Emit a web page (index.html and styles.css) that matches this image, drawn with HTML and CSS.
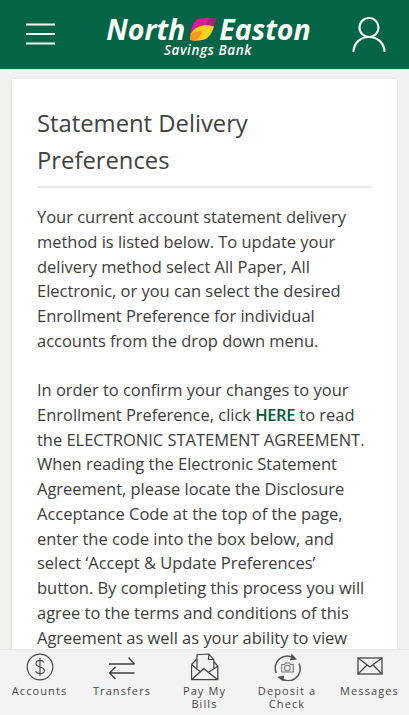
FILE: index.html
```html
<!DOCTYPE html>
<html lang="en">
<head>
<meta charset="utf-8">
<title>Statement Delivery Preferences</title>
<link rel="stylesheet" href="styles.css">
</head>
<body>
<div class="app">
  <header class="topbar">
    <svg class="menu" width="30" height="22" viewBox="0 0 30 22"><path d="M0 1.500H29M0 11H29M0 20.500H29" stroke="#f2f7f4" stroke-width="2" fill="none"/></svg>
    <div class="logo">
      <div class="logo-main"><span class="north">North</span><svg class="leaf" width="27" height="23" viewBox="0 0 28 24"><path d="M8 1 C12 0 22 0 27 0 C26 8 22 18 16 22 C12 24 4 24 0 23 C0 14 2 5 8 1Z" fill="#e2189a"/><path d="M20 0H27C27 3 26 6 25 9L17 7Z" fill="#a8246e"/><path d="M1 16C6 7 18 6 25 9C23 15 20 20 15 22.500C10 24 4 24 0 23Z" fill="#f4d21f"/><path d="M1 17C4 14 9 13 13 14C11 18 9 21 6 23.500L0 23Z" fill="#f79a1c"/></svg><span class="easton">Easton</span></div>
      <div class="logo-sub">Savings Bank</div>
    </div>
    <svg class="user" width="34" height="36" viewBox="0 0 34 36"><circle cx="17" cy="11.500" r="9.500" fill="none" stroke="#f5f9f7" stroke-width="2.200"/><path d="M1.500 35C2.500 26 9 21 17 21C25 21 31.500 26 32.500 35" fill="none" stroke="#f5f9f7" stroke-width="2.200" stroke-linecap="round"/></svg>
  </header>
  <main class="content">
    <section class="card">
      <h1 class="title">Statement Delivery Preferences</h1>
      <p class="para">Your current account statement delivery method is listed below. To update your delivery method select All Paper, All Electronic, or you can select the desired Enrollment Preference for individual accounts from the drop down menu.</p>
      <p class="para">In order to confirm your changes to your Enrollment Preference, click <a class="link" href="#">HERE</a> to read the ELECTRONIC STATEMENT AGREEMENT. When reading the Electronic Statement Agreement, please locate the Disclosure Acceptance Code at the top of the page, enter the code into the box below, and select ‘Accept &amp; Update Preferences’ button. By completing this process you will agree to the terms and conditions of this Agreement as well as your ability to view</p>
    </section>
  </main>
  <nav class="tabs">
    <a class="tab" href="#">
      <svg width="28" height="28" viewBox="0 0 28 28"><circle cx="14" cy="14" r="12.800" fill="none" stroke="#4a4a4a" stroke-width="1.200"/><path d="M18 9.500C17 7.800 15.500 7.300 14 7.300C11.800 7.300 10 8.500 10 10.500C10 15 18.300 13 18.300 17.500C18.300 19.500 16.300 20.700 14 20.700C12 20.700 10.500 20 9.600 18.300M14 5V23" fill="none" stroke="#4a4a4a" stroke-width="1.200"/></svg>
      <span>Accounts</span>
    </a>
    <a class="tab" href="#">
      <svg width="28" height="28" viewBox="0 0 28 28"><path d="M1 11H26.500M20.500 4.500L26.500 11M1 20H26.500M7.500 26L1.500 20L7.500 14" fill="none" stroke="#3f3f3f" stroke-width="1.400"/></svg>
      <span>Transfers</span>
    </a>
    <a class="tab" href="#">
      <svg width="28" height="28" viewBox="0 0 28 28"><path d="M0.500 11.500V26.700H26.800V13.300M0.500 11.500L6 6M26.800 13.300L22.800 8.500M0.500 26.700L12.800 15.700L26.800 26.700M0.500 11.500L9.500 19M26.800 13.300L17.800 19" fill="none" stroke="#444" stroke-width="1.300"/><path d="M6 15V1.700L17.800 1L22.800 6.700V15M17.800 1L17.500 6.500H22.800" fill="none" stroke="#444" stroke-width="1.200"/></svg>
      <span>Pay My Bills</span>
    </a>
    <a class="tab" href="#">
      <svg width="28" height="28" viewBox="0 0 28 28"><path d="M3.300 20A12 12 0 0 1 21.500 5.500M26 10.500A12 12 0 0 1 7 24.500" fill="none" stroke="#555" stroke-width="1.500"/><path d="M18.500 0.500L24 6.500L17 7.500ZM10.500 28.500L4 24L11 22.500Z" fill="#555"/><path d="M8.700 11.500H11.500L12.500 10H16.500L17.500 11.500H20.300V19H8.700Z" fill="none" stroke="#777" stroke-width="1.100"/><circle cx="14.300" cy="15" r="2.800" fill="none" stroke="#777" stroke-width="1.100"/></svg>
      <span>Deposit a Check</span>
    </a>
    <a class="tab" href="#">
      <svg width="26" height="28" viewBox="0 0 26 28"><rect x="1" y="5" width="24" height="16" fill="none" stroke="#444" stroke-width="1.300"/><path d="M1 5L13 14L25 5M1 21L10 12M25 21L16 12" fill="none" stroke="#444" stroke-width="1.300"/></svg>
      <span>Messages</span>
    </a>
  </nav>
</div>
</body>
</html>
```
FILE: styles.css
```css
* { box-sizing: border-box; }
html, body { margin: 0; height: 100%; }
body { font-family: "Open Sans", sans-serif; color: #3f3f3f; background: #f3f1ee; }
.app { width: 409px; height: 715px; display: flex; flex-direction: column; overflow: hidden; }
.topbar { flex: none; height: 69px; background: #036546; display: flex; align-items: center; padding: 0 23px 0 26px; }
.menu { flex: none; margin-top: -1px; }
.logo { flex: 1; color: #fff; text-align: center; font-style: italic; margin: 4px 0 0 24px; }
.logo-main { display: flex; justify-content: center; align-items: center; font-size: 28.500px; font-weight: 700; line-height: 27px; height: 27px; margin-right: 15px; }
.north { margin-right: 5px; }
.easton { margin-left: 2px; }
.leaf { flex: none; }
.logo-sub { font-size: 13.500px; font-weight: 600; line-height: 15px; margin: 0 16px 0 0; letter-spacing: 0.6px; }
.user { flex: none; margin-top: -2px; }
.content { flex: 1; min-height: 0; padding: 10px 12px 0; overflow: hidden; }
.card { background: #fff; box-shadow: 0 0 3px #d9d7d3; padding: 26px 25px 0 25px; height: 600px; }
.title { margin: 0 0 17px; padding-bottom: 7px; font-size: 23.800px; font-weight: 400; line-height: 37px; color: #414141; border-bottom: 2px solid #e9e9e9; }
.para { margin: 0 0 24.500px; font-size: 16.500px; line-height: 24.750px; color: #3c3c3c; letter-spacing: -0.02px; }
.link { color: #03553a; font-weight: 600; text-decoration: none; letter-spacing: -0.4px; }
.tabs { flex: none; height: 66px; background: #f3f3f3; border-top: 1px solid #e6e6e6; display: grid; grid-template-columns: repeat(5, 82.500px); justify-content: center; }
.tab { display: flex; flex-direction: column; align-items: center; padding-top: 3px; color: #474747; text-decoration: none; font-size: 11px; line-height: 12.500px; text-align: center; letter-spacing: 1.100px; }
.tab svg { flex: none; margin-bottom: 4px; }
.tab span { padding: 0 12px; }
```
